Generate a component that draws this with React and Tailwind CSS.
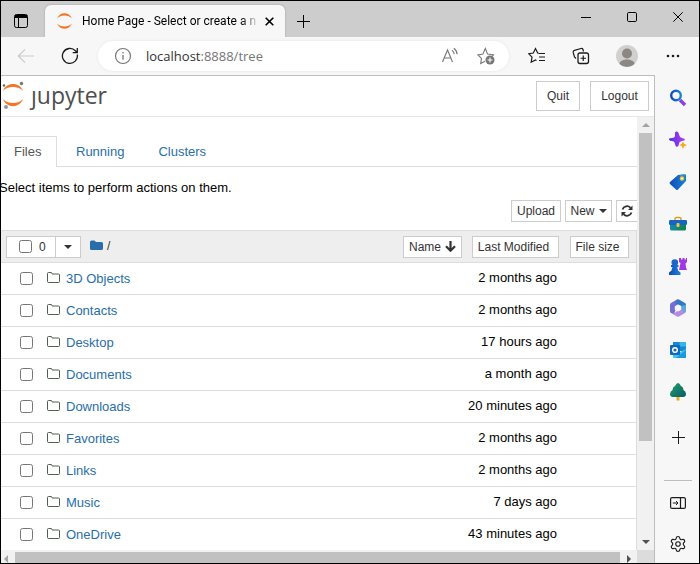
import { useState } from "react";
import { Settings } from "lucide-react";

const files = [
  { name: "3D Objects", modified: "2 months ago" },
  { name: "Contacts", modified: "2 months ago" },
  { name: "Desktop", modified: "17 hours ago" },
  { name: "Documents", modified: "a month ago" },
  { name: "Downloads", modified: "20 minutes ago" },
  { name: "Favorites", modified: "2 months ago" },
  { name: "Links", modified: "2 months ago" },
  { name: "Music", modified: "7 days ago" },
  { name: "OneDrive", modified: "43 minutes ago" },
];

const Icon = ({ size = 18, width, height, box = "0 0 18 18", className = "", children }) => (
  <svg
    width={width ?? size}
    height={height ?? size}
    viewBox={box}
    fill="none"
    stroke="currentColor"
    className={`shrink-0 ${className}`}
    aria-hidden="true"
  >
    {children}
  </svg>
);

const Caret = ({ className = "" }) => (
  <Icon width={8} height={4} box="0 0 8 4" className={className}>
    <path d="M0 0h8L4 4z" fill="currentColor" stroke="none" />
  </Icon>
);

const TitleBar = () => (
  <div className="flex h-9 shrink-0 items-end bg-[#cdcdcd] text-black">
    <button aria-label="Tab actions" className="flex h-8 w-11 items-center justify-center pr-1">
      <Icon width={14} height={14} box="0 0 14 14">
        <rect x=".5" y=".5" width="13" height="13" rx="2" />
        <path d="M1 1h12v3H1z" fill="currentColor" stroke="none" />
        <path d="M4.500 4v9" />
      </Icon>
    </button>
    <div className="flex h-8 w-60 items-center rounded-t-md bg-[#f7f7f7] pr-2.5 pl-3 shadow-[0_0_2px_#999]">
      <Icon width={15} height={16} box="0 0 15 16">
        <g fill="#f37726" stroke="none">
          <path d="M0 5.500C3-1.600 12-1.600 15 5.500 11.500 1.600 3.500 1.600 0 5.500z" />
          <path d="M0 10.500C3 17.600 12 17.600 15 10.500 11.500 14.400 3.500 14.400 0 10.500z" />
        </g>
      </Icon>
      <span className="ml-2.5 w-[174px] overflow-hidden bg-linear-to-r from-black from-90% to-[#ccc] bg-clip-text font-[Roboto,sans-serif] text-xs whitespace-nowrap text-transparent">
        Home Page - Select or create a n
      </span>
      <button aria-label="Close tab" className="ml-2 flex h-5 flex-1 items-center justify-center">
        <Icon size={9} box="0 0 9 9">
          <path d="M.7.7l7.600 7.600M8.300.7L.7 8.300" strokeWidth="1.600" />
        </Icon>
      </button>
    </div>
    <button aria-label="New tab" className="flex h-8 w-9 items-center justify-center">
      <Icon size={13} box="0 0 13 13">
        <path d="M6.500 0v13M0 6.500h13" />
      </Icon>
    </button>
    <div className="-mr-0.5 mb-1 ml-auto flex h-8 text-black">
      <button aria-label="Minimize" className="flex w-[46px] items-center justify-center">
        <Icon size={10} box="0 0 10 10">
          <path d="M0 5.500h10" />
        </Icon>
      </button>
      <button aria-label="Maximize" className="flex w-[46px] items-center justify-center">
        <Icon size={10} box="0 0 10 10">
          <rect x=".5" y=".5" width="9" height="9" rx="1.200" />
        </Icon>
      </button>
      <button aria-label="Close" className="flex w-[46px] items-center justify-center">
        <Icon size={10} box="0 0 10 10">
          <path d="M.3.3l9.400 9.400M9.700.3L.3 9.700" />
        </Icon>
      </button>
    </div>
  </div>
);

const Toolbar = () => (
  <div className="flex h-[38px] shrink-0 items-center bg-[#f7f7f7] pr-1 pl-[3px] text-[#1b1b1b]">
    <button aria-label="Back" disabled className="flex w-11 justify-center text-[#cbcbcb]">
      <Icon>
        <path d="M17 9H1.500M8 2.300L1.300 9 8 15.700" strokeWidth="1.200" />
      </Icon>
    </button>
    <button aria-label="Refresh" className="flex w-11 justify-center">
      <Icon>
        <path d="M16.300 7.600A7.500 7.500 0 1 1 14.400 3.800L16 5.300M16.300 1v4.600h-4.600" strokeWidth="1.300" />
      </Icon>
    </button>
    <div className="mx-1.5 flex h-[30px] flex-1 items-center rounded-full bg-white pr-3.5 pl-4 text-[#767676] shadow-[0_0_3px_#e4e4e4]">
      <Icon>
        <circle cx="9" cy="9" r="7.500" strokeWidth="1.200" />
        <path d="M9 8v4.800M9 5v1.400" strokeWidth="1.300" />
      </Icon>
      <a href="#tree" className="ml-3.5 flex-1 text-[13px] leading-5">
        <span className="text-[#333]">localhost</span>:8888/tree
      </a>
      <button aria-label="Read aloud" className="mr-4.5">
        <Icon>
          <path d="M1.500 15L6.500 3 11.500 15M3.200 11h6.600M11 3.300c1.400 1 2.100 2.400 2.200 4M12.800 1.200c2 1.400 3.200 3.600 3.300 6.100" strokeWidth="1.100" />
        </Icon>
      </button>
      <button aria-label="Add to favorites">
        <Icon>
          <path d="M8 14.200l-4.300 2.200.8-5L.9 7.900l5-.8L8.300 1.500l2.300 5.600 5.900.7-1.500 1.500" strokeWidth="1.100" />
          <circle cx="13" cy="13" r="4.500" fill="currentColor" stroke="none" />
          <path d="M13 10.600v4.800M10.600 13h4.800" stroke="#fff" strokeWidth="1.100" />
        </Icon>
      </button>
    </div>
    <button aria-label="Favorites" className="flex w-11 justify-center">
      <Icon>
        <path
          d="M10.800 6.300L9.700 6 7.500 1.500 5.300 6l-4.600.7L4 10.200l-.8 5 4.300-2.200 1 .5M11 6.500h6M11 10h6M11 13.500h6"
          strokeWidth="1.200"
        />
      </Icon>
    </button>
    <button aria-label="Collections" className="flex w-11 justify-center">
      <Icon>
        <path d="M4 11.500L2.500 10 1.200 5.500Q.8 3.800 2.500 3.300L9 1.500q1.500-.4 2 1l.5 2" strokeWidth="1.200" />
        <rect x="6" y="6" width="10.500" height="10.500" rx="2" strokeWidth="1.300" />
        <path d="M11.250 8.500v5.500M8.500 11.250H14" strokeWidth="1.200" />
      </Icon>
    </button>
    <button aria-label="Profile" className="flex w-12 justify-center">
      <Icon size={22} box="0 0 22 22">
        <g stroke="none">
          <circle cx="11" cy="11" r="11" fill="#d2d0ce" />
          <circle cx="11" cy="8.500" r="5" fill="#8b8782" />
          <path d="M3.500 19c0-6 15-6 15 0a11 11 0 0 1-15 0z" fill="#8b8782" />
        </g>
      </Icon>
    </button>
    <button aria-label="Settings and more" className="flex w-11 justify-center">
      <Icon width={14} height={4} box="0 0 14 4">
        <g fill="currentColor" stroke="none">
          <circle cx="2" cy="2" r="1.300" />
          <circle cx="7" cy="2" r="1.300" />
          <circle cx="12" cy="2" r="1.300" />
        </g>
      </Icon>
    </button>
  </div>
);

const apps = [
  {
    label: "Search",
    art: (
      <>
        <path d="M11 11l5 5" stroke="#8b3fe8" strokeWidth="3.400" />
        <circle cx="7" cy="6.500" r="4.800" stroke="url(#blue)" strokeWidth="2.400" />
      </>
    ),
  },
  {
    label: "Discover",
    art: (
      <g stroke="none">
        <path
          d="M8 .5Q9.500.5 10 3.500T13 7q3 .5 3 1.500t-3 1.500T10 13q-.5 3-2 3t-2-3-3-3T0 8.500 3 7 6 3.500 8 .5z"
          fill="url(#violet)"
        />
        <path d="M14 10.500l1.200 2.300 2.800 1.200-2.800 1.200L14 18l-1.200-2.800L10.500 14l2.300-1.200z" fill="#f4ae14" />
      </g>
    ),
  },
  {
    label: "Shopping",
    art: (
      <g stroke="none">
        <path d="M9 2l7-.8q1 0 1 1V8L9 16.500q-1 1-2 0L1 11q-1-1 0-2z" fill="url(#blue)" />
        <path d="M11 2.400l5-.6" stroke="#32a4df" />
        <circle cx="13" cy="5.500" r="1.700" fill="#fff" stroke="#f5bd26" strokeWidth="1.200" />
      </g>
    ),
  },
  {
    label: "Tools",
    art: (
      <>
        <path d="M6 6V4q0-1.500 1.500-1.500h3Q12 2.500 12 4v2" stroke="#d8a020" strokeWidth="1.500" />
        <g stroke="none">
          <path d="M1 8h16v6q0 1.500-1.500 1.500h-13Q1 15.500 1 14z" fill="url(#green)" />
          <rect y="5" width="18" height="5" rx="1.200" fill="#1565c8" />
          <rect x="7.500" y="8" width="3" height="4" rx="1" fill="#fbc43a" />
        </g>
      </>
    ),
  },
  {
    label: "Games",
    art: (
      <g stroke="none">
        <path d="M10 1h2v1.500h1.500V1h2v1.500H17V1h1v4l-1.500 1.500.5 4 1 2.500h-8l1.500-7L10 5z" fill="#a238e4" />
        <circle cx="5.800" cy="5.500" r="3.300" fill="#1d66c9" />
        <path d="M2 8h7.500v2H8.300l.7 3.500 2.500 2v2.500H0v-2.500l2.500-2L3.500 10H2z" fill="url(#blue)" />
      </g>
    ),
  },
  {
    label: "Microsoft 365",
    art: (
      <g stroke="none">
        <path d="M8 .5L2 4Q1 4.600 1 6v6q0 1.400 1 2l3 1.500 2-6V7l4-2.500z" fill="#746fd6" />
        <path d="M8 .5q1-.5 2 0L16 4q1 .6 1 2v6l-5-1.500V7L6 4z" fill="#3579c4" />
        <path d="M17 12q0 1.400-1 2l-6 3.500q-1 .5-2 0L3 14.500q3 0 4.500-2l4.500-2z" fill="#b58be4" />
        <path d="M12 7l5-1v6q-1 1.500-3 0l-2-1.500z" fill="#57a9dc" />
        <path d="M9 5.500l3.200 1.700v3.600L9 12.500l-3.200-1.700V7.200z" fill="#f7f7f7" />
      </g>
    ),
  },
  {
    label: "Outlook",
    art: (
      <g stroke="none">
        <path d="M4 1h13v9H4z" fill="#1688d5" />
        <path d="M10.500 1H17v4.500h-6.500z" fill="#35b5ed" />
        <path d="M4 8l7 3 6-3v9H5q-1 0-1-1z" fill="#43c1ef" />
        <path d="M7 17l10-8v7q0 1-1 1z" fill="#1d99de" />
        <rect x="1" y="4" width="10" height="10" rx="1" fill="#0f68bd" />
        <circle cx="6" cy="9" r="2.300" stroke="#fff" strokeWidth="1.500" />
      </g>
    ),
  },
  {
    label: "Tree",
    art: (
      <g stroke="none">
        <path d="M7.500 12h3v5.500h-3z" fill="#f0a51d" />
        <path d="M9 0q1.500 0 3 3 2.500 1 2.500 4 2.500 1.500 2.500 4 0 3-3 3H4q-3 0-3-3 0-2.500 2.500-4Q3.500 4 6 3q1.500-3 3-3z" fill="url(#tree)" />
      </g>
    ),
  },
];

const Sidebar = () => (
  <aside className="flex w-11 shrink-0 flex-col items-center bg-[#f7f7f7] pt-0.5 pl-0.5 text-[#1b1b1b]">
    <svg className="absolute size-0" aria-hidden="true">
      <defs>
        <linearGradient id="blue">
          <stop stopColor="#1448c4" />
          <stop offset="1" stopColor="#1687cf" />
        </linearGradient>
        <linearGradient id="violet">
          <stop stopColor="#5432ef" />
          <stop offset="1" stopColor="#b53ce8" />
        </linearGradient>
        <linearGradient id="green">
          <stop stopColor="#128bb2" />
          <stop offset="1" stopColor="#138344" />
        </linearGradient>
        <linearGradient id="tree" x2="1" y2="1">
          <stop stopColor="#1ea06a" />
          <stop offset="1" stopColor="#0c5a66" />
        </linearGradient>
      </defs>
    </svg>
    {apps.map((app) => (
      <button key={app.label} aria-label={app.label} className="flex h-[42px] w-full items-center justify-center">
        <Icon>{app.art}</Icon>
      </button>
    ))}
    <button aria-label="Add" className="flex h-12 w-full items-center justify-center">
      <Icon size={13} box="0 0 13 13">
        <path d="M6.500 0v13M0 6.500h13" />
      </Icon>
    </button>
    <div className="mt-auto flex flex-col items-center pb-2.5">
      <div className="mb-4 h-px w-7 bg-[#bdbdbd]" />
      <button aria-label="Hide sidebar" className="mb-[26px]">
        <Icon width={16} height={12} box="0 0 16 12" className="block">
          <rect x=".6" y=".6" width="14.800" height="10.800" rx="1.500" strokeWidth="1.200" />
          <path d="M10.500 0v12" strokeWidth="1.200" />
          <path d="M2.800 6H8M6 4l2 2-2 2" />
        </Icon>
      </button>
      <button aria-label="Settings">
        <Settings size={18} strokeWidth={1.5} className="block" />
      </button>
    </div>
  </aside>
);

const Header = () => (
  <header className="flex h-[41px] shrink-0 items-center border-b border-[#e7e7e7] bg-white pr-[5px] text-xs text-[#333]">
    <a href="#home" aria-label="Jupyter" className="flex items-center pb-0.5">
      <Icon width={24} height={28} box="0 0 24 28">
        <g stroke="none">
          <path d="M2 10C5 .5 19 .5 22 10 18 4.800 6 4.800 2 10z" fill="#f37726" />
          <path d="M2 18C5 27.500 19 27.500 22 18 18 23.200 6 23.200 2 18z" fill="#f37726" />
          <circle cx="20.500" cy="2.500" r="1.700" fill="#767677" />
          <circle cx="3" cy="4.500" r="1.200" fill="#616262" />
          <circle cx="5" cy="26" r="2" fill="#989798" />
        </g>
      </Icon>
      <span className="ml-1.5 font-['Open_Sans',sans-serif] text-[23px] leading-8 text-[#4e4e4e]">ȷupyter</span>
    </a>
    <button className="ml-auto h-[30px] w-11 border border-[#ccc]">Quit</button>
    <button className="ml-2.5 h-[30px] w-[59px] border border-[#ccc]">Logout</button>
  </header>
);

const Tabs = () => (
  <nav className="flex h-[50px] items-end border-b border-[#ddd] text-[#296eaa]">
    <a
      href="#files"
      className="-mb-px flex h-[31px] w-14 items-center border-t border-r border-[#ddd] bg-white pl-[13px] text-[#555]"
    >
      Files
    </a>
    <a href="#running" className="flex h-7 items-center pr-4 pl-[19px]">
      Running
    </a>
    <a href="#clusters" className="flex h-7 items-center px-4.5">
      Clusters
    </a>
  </nav>
);

const FileTable = () => {
  const [selected, setSelected] = useState([]);

  const toggle = (name) =>
    setSelected((prev) => (prev.includes(name) ? prev.filter((n) => n !== name) : [...prev, name]));

  const toggleAll = () =>
    setSelected(selected.length === files.length ? [] : files.map((f) => f.name));

  return (
    <table className="mt-2 w-full table-fixed border-separate border-spacing-0 border-t border-r border-[#ddd]">
      <colgroup>
        <col />
        <col className="w-[97px]" />
        <col className="w-[77px]" />
      </colgroup>
      <thead className="bg-[#eee] text-xs text-[#333]">
        <tr className="h-8">
          <th className="border-b border-[#ddd] p-0 font-normal">
            <div className="flex items-center pl-[5px]">
              <div className="flex h-[22px] border border-[#ccc] bg-white">
                <label className="flex w-[49px] items-center gap-[7px] border-r border-[#ccc] pl-3">
                  <input
                    type="checkbox"
                    className="size-[13px]"
                    checked={selected.length === files.length}
                    onChange={toggleAll}
                  />
                  {selected.length}
                </label>
                <button aria-label="Select by type" className="flex w-6 items-center justify-center">
                  <Caret />
                </button>
              </div>
              <a href="#root" className="ml-[9px] flex items-center gap-1 pb-0.5">
                <Icon width={13} height={11} box="0 0 13 11">
                  <path
                    d="M0 2Q0 .5 1.500.5h2.700Q5.500.5 5.700 2h5.800Q13 2 13 3.500v5q0 1.500-1.500 1.500h-10Q0 10 0 8.500z"
                    fill="#296eaa"
                    stroke="none"
                  />
                </Icon>
                /
              </a>
              <button className="ml-auto flex h-[22px] w-[59px] items-center justify-center gap-1 border border-[#ccc] bg-white">
                Name
                <Icon width={11} height={11} box="0 0 11 11">
                  <path d="M5.500 0v9.500M1 5.200l4.500 4.500L10 5.200" strokeWidth="2.200" />
                </Icon>
              </button>
            </div>
          </th>
          <th className="border-b border-[#ddd] p-0 pl-2.5 font-normal">
            <button className="block h-[22px] w-full border border-[#ccc] bg-white pr-1">Last Modified</button>
          </th>
          <th className="border-b border-[#ddd] p-0 pr-[7px] pl-[11px] font-normal">
            <button className="block h-[22px] w-full border border-[#ccc] bg-white pr-1">File size</button>
          </th>
        </tr>
      </thead>
      <tbody>
        {files.map((file) => (
          <tr key={file.name} className="h-8">
            <td className="border-b border-[#ddd] p-0">
              <div className="flex items-center pl-[19px]">
                <input
                  type="checkbox"
                  aria-label={file.name}
                  className="size-[13px]"
                  checked={selected.includes(file.name)}
                  onChange={() => toggle(file.name)}
                />
                <Icon width={13} height={11} box="0 0 13 11" className="mb-0.5 ml-3.5 text-[#4f5f4f]">
                  <path d="M.5 1.500Q.5.500 1.500.5H4Q5 .5 5.200 2h6.300q1 0 1 1v6.500q0 1-1 1h-10q-1 0-1-1z" />
                </Icon>
                <a href="#folder" className="ml-1.5 text-[#296eaa]">
                  {file.name}
                </a>
              </div>
            </td>
            <td className="border-b border-[#ddd] p-0 pr-0.5 pb-0.5 text-right">{file.modified}</td>
            <td className="border-b border-[#ddd] p-0" />
          </tr>
        ))}
      </tbody>
    </table>
  );
};

const VerticalScrollbar = () => (
  <div className="flex w-[17px] shrink-0 flex-col items-center bg-[#f1f1f1] text-[#505050]">
    <div className="flex h-4 items-center text-[#a3a3a3]">
      <Caret className="rotate-180" />
    </div>
    <div className="w-[13px] flex-[308] bg-[#c1c1c1]" />
    <div className="flex-[92]" />
    <div className="flex h-[17px] items-center">
      <Caret />
    </div>
  </div>
);

const HorizontalScrollbar = () => (
  <div className="flex h-[13px] shrink-0 bg-[#f1f1f1]">
    <div className="flex w-3.5 items-center justify-center pt-1 pr-1 text-[#a3a3a3]">
      <Icon width={4} height={8} box="0 0 4 8">
        <path d="M4 0v8L0 4z" fill="currentColor" stroke="none" />
      </Icon>
    </div>
    <div className="mt-0.5 flex-1 bg-[#c1c1c1]" />
    <div className="flex w-[17px] items-center justify-center pt-1 text-[#505050]">
      <Icon width={4} height={8} box="0 0 4 8">
        <path d="M0 0v8l4-4z" fill="currentColor" stroke="none" />
      </Icon>
    </div>
    <div className="w-[17px] bg-[#dcdcdc]" />
  </div>
);

const App = () => {
  return (
    <div className="flex h-screen flex-col overflow-hidden border border-black bg-white font-['Open_Sans',sans-serif]">
      <TitleBar />
      <Toolbar />
      <div className="flex min-h-0 flex-1 bg-[#f7f7f7]">
        <div className="flex min-w-0 flex-1 flex-col border-t border-r border-[#bdbdbd] bg-white font-['Liberation_Sans',Arial,sans-serif] text-[13px] leading-5 text-black">
          <Header />
          <div className="flex min-h-0 flex-1">
            <main className="min-w-0 flex-1 overflow-hidden">
              <Tabs />
              <p className="-ml-0.5 pt-[11px]">Select items to perform actions on them.</p>
              <div className="mt-0.5 -mr-1 flex justify-end text-xs text-[#333]">
                <button className="h-[22px] w-[50px] border border-[#ccc]">Upload</button>
                <button className="ml-1 flex h-[22px] w-[47px] items-center justify-center gap-1 border border-[#ccc]">
                  New
                  <Caret />
                </button>
                <button
                  aria-label="Refresh list"
                  className="ml-1 flex h-[22px] w-[25px] items-center border border-[#ccc] pl-1"
                >
                  <Icon width={12} height={12} box="0 0 12 12">
                    <path d="M1.500 4.500A4.700 4.700 0 0 1 9.500 2.800M10.500 7.500A4.700 4.700 0 0 1 2.500 9.200" strokeWidth="1.800" />
                    <path d="M11.500.5V5H7zM.5 11.500V7H5z" fill="currentColor" stroke="none" />
                  </Icon>
                </button>
              </div>
              <FileTable />
            </main>
            <VerticalScrollbar />
          </div>
          <HorizontalScrollbar />
        </div>
        <Sidebar />
      </div>
    </div>
  );
};

export default App;
